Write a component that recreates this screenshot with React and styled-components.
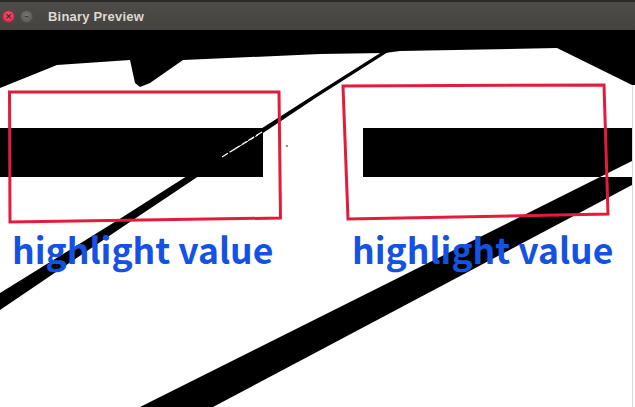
import React from 'react';
import styled, { createGlobalStyle } from 'styled-components';

const GlobalStyle = createGlobalStyle`
  html, body {
    margin: 0;
    padding: 0;
    background: #ffffff;
  }
`;

const Window = styled.div`
  width: 635px;
  height: 407px;
  display: flex;
  flex-direction: column;
  overflow: hidden;
  background: #000;
`;

const TitleBar = styled.div`
  height: 28px;
  flex: 0 0 auto;
  display: flex;
  align-items: center;
  padding: 0 0 0 2px;
  border-top: 2px solid #2b2a28;
  background: linear-gradient(#4d4c48, #44433f);
`;

const Controls = styled.div`
  display: flex;
  align-items: center;
  gap: 5px;
  margin-top: 1px;
`;

const CircleButton = styled.span`
  width: 13px;
  height: 13px;
  box-sizing: border-box;
  border-radius: 50%;
  display: flex;
  align-items: center;
  justify-content: center;
  background: ${({ $close }) =>
    $close
      ? 'radial-gradient(circle at 50% 40%, #f2647c, #d8304f 70%)'
      : 'radial-gradient(circle at 50% 40%, #77766f, #5f5e59 70%)'};
  border: 1px solid ${({ $close }) => ($close ? '#a5263c' : '#52514d')};
  color: ${({ $close }) => ($close ? '#5a1420' : '#3e3d3a')};
  font: bold 9px/1 'DejaVu Sans', sans-serif;
`;

const Title = styled.span`
  margin-left: 15px;
  margin-top: 1px;
  color: #dcd9d2;
  font-family: 'Liberation Sans', Arial, sans-serif;
  font-weight: 700;
  font-size: 13px;
  letter-spacing: 0.2px;
`;

const Canvas = styled.div`
  position: relative;
  flex: 1 1 auto;
  background: #fff;
`;

const Picture = styled.svg`
  display: block;
  width: 635px;
  height: 377px;
`;

const Label = styled.span`
  position: absolute;
  top: 201px;
  left: ${({ $left }) => $left}px;
  color: #1452e3;
  font-family: 'Noto Sans CJK JP', 'Noto Sans', sans-serif;
  font-weight: 700;
  font-size: 35.5px;
  line-height: 35.5px;
  white-space: nowrap;
`;

const marks = [
  '9.5,92 279,92 280.5,218 10,222',
  '343,86 604,85 608,214 348,219',
];

const App = () => {
  return (
    <>
      <GlobalStyle />
      <Window>
        <TitleBar>
          <Controls>
            <CircleButton $close>×</CircleButton>
            <CircleButton>–</CircleButton>
          </Controls>
          <Title>Binary Preview</Title>
        </TitleBar>
        <Canvas>
          <Picture viewBox="0 30 635 377">
            <rect x="0" y="30" width="635" height="377" fill="#fff" />
            <path
              d="M0,30 L635,30 L635,85 L632,85 L557,48 L400,51 L385,53 L320,54 L183,60 L150,83 L140,87 L135,83 L130,60 L57,65 L0,88 Z"
              fill="#000"
            />
            <path
              d="M388,52 L317,97 L118,230 L0,310 L0,293 L118,220 L317,93 L385,50 Z"
              fill="#000"
            />
            <rect x="0" y="128" width="263" height="49" fill="#000" />
            <path
              d="M222,157 L262,132"
              stroke="#fff"
              strokeWidth="1.3"
              strokeDasharray="7 2 12 3 5 2"
              fill="none"
            />
            <path
              d="M240,146 L258,135"
              stroke="#fff"
              strokeWidth="1"
              strokeDasharray="4 2"
              fill="none"
            />
            <circle cx="287" cy="146" r="0.8" fill="#000" />
            <path d="M363,128 L632,128 L632,161 L600,177 L363,177 Z" fill="#000" />
            <path d="M600,177 L632,177 L632,185 L213,407 L140,407 Z" fill="#000" />
            <line x1="632.5" y1="85" x2="632.5" y2="407" stroke="#ddd8dc" strokeWidth="1" />
            {marks.map((points) => (
              <polygon
                key={points}
                points={points}
                fill="none"
                stroke="#e31b3d"
                strokeWidth="3"
              />
            ))}
          </Picture>
          <Label $left={12}>highlight value</Label>
          <Label $left={352}>highlight value</Label>
        </Canvas>
      </Window>
    </>
  );
};

export default App;
